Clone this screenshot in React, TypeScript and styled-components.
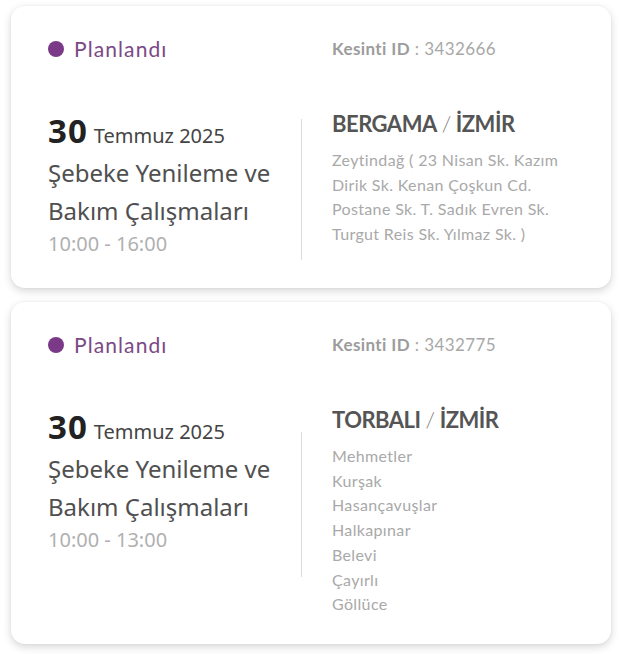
import React from "react";
import styled, { createGlobalStyle } from "styled-components";

const GlobalStyle = createGlobalStyle`
  html, body {
    margin: 0;
    padding: 0;
    background: #ffffff;
  }
  * {
    box-sizing: border-box;
  }
`;

const Page = styled.div`
  padding: 6px 11px 11px;
  display: flex;
  flex-direction: column;
  gap: 14px;
`;

const Card = styled.div`
  background: #ffffff;
  border-radius: 14px;
  box-shadow: 0 3px 8px rgba(0, 0, 0, 0.16), 0 0 3px rgba(0, 0, 0, 0.05);
  padding: 31px 36px 27px 37px;
  display: grid;
  grid-template-columns: 253px 1px 1fr;
  grid-template-rows: auto auto;
  row-gap: 48px;
`;

const Status = styled.div`
  grid-column: 1;
  display: flex;
  align-items: center;
  gap: 10px;
  font-family: "Lato", "Liberation Sans", sans-serif;
  font-size: 21px;
  line-height: 24px;
  letter-spacing: 1.1px;
  color: #7b4886;
`;

const Dot = styled.span`
  width: 16px;
  height: 16px;
  border-radius: 50%;
  background: #7a3a88;
  flex-shrink: 0;
`;

const IdLine = styled.div`
  grid-column: 3;
  padding-left: 30px;
  font-family: "Lato", "Liberation Sans", sans-serif;
  font-size: 17px;
  line-height: 24px;
  letter-spacing: 0.4px;
  color: #a8a8a8;

  b {
    font-weight: 700;
    color: #9c9c9c;
  }
`;

const Left = styled.div`
  grid-column: 1;
  font-family: "Noto Sans", "Open Sans", sans-serif;
`;

const DateLine = styled.div`
  line-height: 40px;
  margin-top: 2px;
  margin-bottom: -2px;
  color: #444;
  font-size: 20px;

  strong {
    font-size: 33px;
    font-weight: 700;
    color: #222;
    margin-right: 6px;
    letter-spacing: 1px;
  }
`;

const Title = styled.div`
  font-size: 24px;
  line-height: 38px;
  color: #505050;
`;

const Time = styled.div`
  font-size: 20px;
  line-height: 27px;
  margin-bottom: 4px;
  color: #b0b0b0;
`;

const Divider = styled.div<{ $top: number; $height: number }>`
  grid-column: 2;
  align-self: start;
  width: 1px;
  height: ${(p) => p.$height}px;
  margin-top: ${(p) => p.$top}px;
  background: #dcdcdc;
`;

const Right = styled.div`
  grid-column: 3;
  padding-left: 30px;
  font-family: "Lato", "Liberation Sans", sans-serif;
`;

const Place = styled.div`
  font-size: 22px;
  line-height: 30px;
  font-weight: 700;
  letter-spacing: -0.5px;
  color: #555;
  margin-bottom: 9px;

  span {
    font-weight: 300;
    color: #777;
    margin: 0 5px;
  }
`;

const Detail = styled.div`
  font-size: 16px;
  line-height: 24.7px;
  letter-spacing: 0.35px;
  color: #a9a9a9;
`;

interface Outage {
  id: string;
  time: string;
  district: string;
  lines: string[];
  divider: { top: number; height: number };
}

const outages: Outage[] = [
  {
    id: "3432666",
    time: "10:00 - 16:00",
    district: "BERGAMA",
    lines: [
      "Zeytindağ ( 23 Nisan Sk. Kazım",
      "Dirik Sk. Kenan Çoşkun Cd.",
      "Postane Sk. T. Sadık Evren Sk.",
      "Turgut Reis Sk. Yılmaz Sk. )",
    ],
    divider: { top: 10, height: 141 },
  },
  {
    id: "3432775",
    time: "10:00 - 13:00",
    district: "TORBALI",
    lines: ["Mehmetler", "Kurşak", "Hasançavuşlar", "Halkapınar", "Belevi", "Çayırlı", "Göllüce"],
    divider: { top: 27, height: 145 },
  },
];

const OutageCard = ({ o }: { o: Outage }) => (
  <Card>
    <Status>
      <Dot />
      Planlandı
    </Status>
    <IdLine>
      <b>Kesinti ID</b> : {o.id}
    </IdLine>
    <Left>
      <DateLine>
        <strong>30</strong>Temmuz 2025
      </DateLine>
      <Title>
        Şebeke Yenileme ve
        <br />
        Bakım Çalışmaları
      </Title>
      <Time>{o.time}</Time>
    </Left>
    <Divider $top={o.divider.top} $height={o.divider.height} />
    <Right>
      <Place>
        {o.district}
        <span>/</span>İZMİR
      </Place>
      {o.lines.map((l) => (
        <Detail key={l}>{l}</Detail>
      ))}
    </Right>
  </Card>
);

export default function App() {
  return (
    <>
      <GlobalStyle />
      <Page>
        {outages.map((o) => (
          <OutageCard key={o.id} o={o} />
        ))}
      </Page>
    </>
  );
}
